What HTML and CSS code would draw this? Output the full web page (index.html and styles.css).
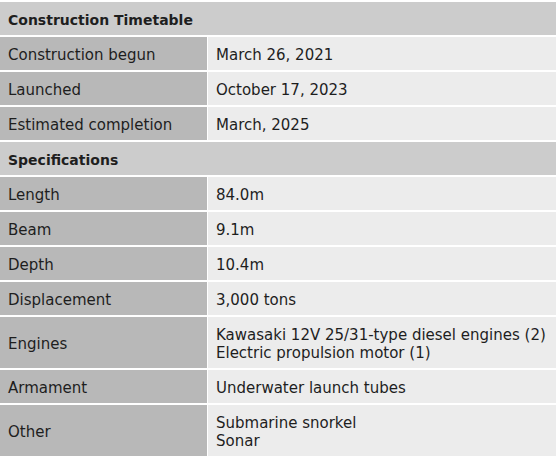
FILE: index.html
```
<!DOCTYPE html>
<html>
<head>
<meta charset="utf-8">
<link rel="stylesheet" href="styles.css">
</head>
<body>
<div class="specs">
  <div class="head">Construction Timetable</div>
  <div class="label">Construction begun</div><div class="value">March 26, 2021</div>
  <div class="label">Launched</div><div class="value">October 17, 2023</div>
  <div class="label">Estimated completion</div><div class="value">March, 2025</div>
  <div class="head">Specifications</div>
  <div class="label">Length</div><div class="value">84.0m</div>
  <div class="label">Beam</div><div class="value">9.1m</div>
  <div class="label">Depth</div><div class="value">10.4m</div>
  <div class="label">Displacement</div><div class="value">3,000 tons</div>
  <div class="label">Engines</div><div class="value">Kawasaki 12V 25/31-type diesel engines (2)<br>Electric propulsion motor (1)</div>
  <div class="label">Armament</div><div class="value">Underwater launch tubes</div>
  <div class="label">Other</div><div class="value">Submarine snorkel<br>Sonar</div>
</div>
</body>
</html>
```
FILE: styles.css
```
html, body {
  margin: 0;
  background: #ffffff;
}
.specs {
  display: grid;
  grid-template-columns: 207px 1fr;
  column-gap: 1px;
  row-gap: 2px;
  padding: 2px 2px 0 0;
  font-family: "DejaVu Sans", Verdana, sans-serif;
  font-size: 15px;
  line-height: 18px;
  color: #1e1e1e;
}
.head {
  grid-column: 1 / 3;
  background: #cccccc;
  font-weight: bold;
  font-size: 14px;
  padding: 9px 8px 6px;
}
.label {
  background: #b8b8b8;
  padding: 9px 8px 6px;
  display: flex;
  align-items: center;
}
.value {
  background: #ececec;
  padding: 9px 8px 6px;
  display: flex;
  align-items: center;
}
```
